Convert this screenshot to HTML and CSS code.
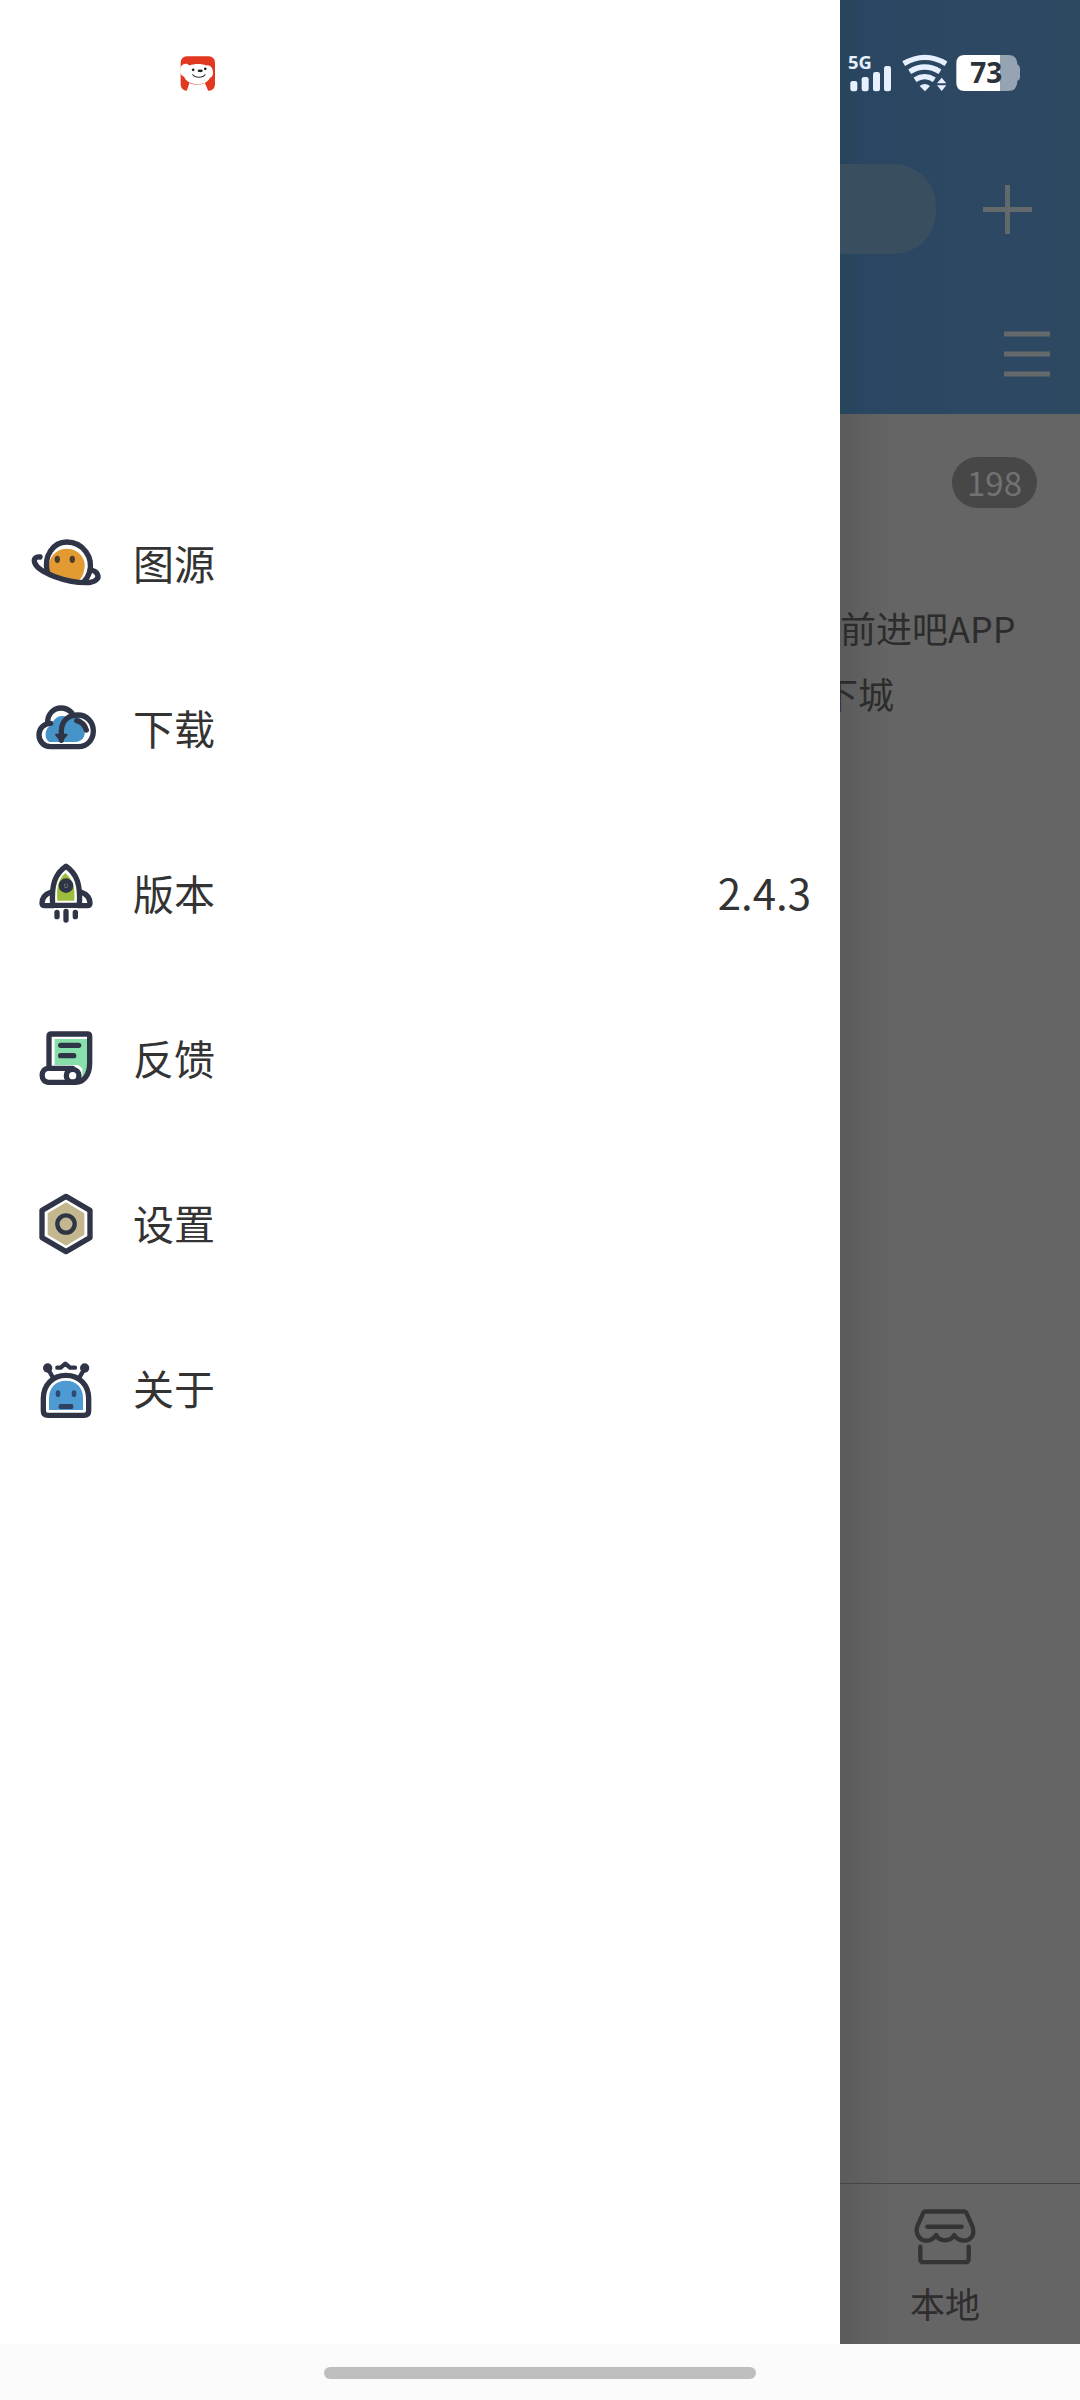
FILE: index.html
```
<!DOCTYPE html>
<html lang="zh-CN">
<head>
    <meta charset="utf-8">
    <meta name="viewport" content="width=device-width, initial-scale=1">
    <title>菜单</title>
    <link rel="stylesheet" href="styles.css">
</head>
<body>
    <div class="screen">
        <aside class="drawer">
            <div class="drawer-status">
                <svg class="logo" viewBox="60 48 104 104" aria-hidden="true">
                    <rect x="62" y="49" width="102" height="102" rx="18" fill="#e2381f"/>
                    <path d="M64 78c8-10 18-8 24-2 14-6 38-6 50 0 10-3 20 6 20 20 0 8-2 14-8 16-8 16-24 20-38 20-18 0-32-5-40-22-12-4-15-20-8-32z" fill="#fff"/>
                    <path d="M88 128c14 6 34 6 46 0l10 24H80z" fill="#fff"/>
                    <path d="M97 102c7 12 32 12 38 0" fill="none" stroke="#333" stroke-width="3"/>
                    <ellipse cx="120" cy="92" rx="8" ry="4" fill="#222"/>
                    <circle cx="99" cy="89" r="4" fill="#222"/>
                    <circle cx="135" cy="86" r="4" fill="#222"/>
                </svg>
            </div>
            <nav>
                <ul class="menu">
                    <li>
                        <a href="#source">
                            <svg class="icon" viewBox="33 27 210 210" aria-hidden="true">
                                <path d="M86 156c-6-34 16-70 54-70 42 0 62 38 52 66-3 16-10 26-18 30-32 0-68-8-88-26z" fill="#e29a33"/>
                                <path d="M82 156c-12-48 18-90 58-90 50 0 82 48 68 92-4 12-8 18-14 24" class="line"/>
                                <path d="M60 111c-12-2-20 6-16 17 10 30 96 60 154 60 26 0 42-12 34-26-4-8-10-10-18-12" class="line"/>
                                <ellipse cx="112" cy="118" rx="8" ry="11" fill="#4b3b29"/>
                                <ellipse cx="157" cy="118" rx="8" ry="11" fill="#4b3b29"/>
                            </svg>
                            <span>图源</span>
                        </a>
                    </li>
                    <li>
                        <a href="#download">
                            <svg class="icon" viewBox="33 12 210 210" aria-hidden="true">
                                <path d="M88 156c-16-8-16-44 8-50 4-24 26-34 46-24 26-10 56 4 52 36 4 24-10 38-28 38z" fill="#4593c7"/>
                                <path d="M92 100c-20 0-35 15-35 34 0 20 14 36 34 36h85c26 0 44-22 44-47 0-27-20-48-46-48-30 0-48 18-50 46v30" class="line"/>
                                <path d="M83 96c0-24 18-42 40-42 14 0 24 6 32 14M170 92c14 3 24 12 29 28" class="line"/>
                                <path d="M108 134l16 20 16-20z" fill="#2f3546" stroke="#2f3546" stroke-width="6" stroke-linejoin="round"/>
                            </svg>
                            <span>下载</span>
                        </a>
                    </li>
                    <li>
                        <a href="#version">
                            <svg class="icon" viewBox="33 27 210 210" aria-hidden="true">
                                <path d="M98 166c-4-60 6-94 40-117 34 23 44 57 40 117z" class="line"/>
                                <path d="M112 152c-3-42 2-62 24-83 22 21 30 41 27 83z" fill="#9dbe3c"/>
                                <circle cx="138" cy="107" r="14" fill="#9dbe8c" class="line"/>
                                <circle cx="138" cy="107" r="5" fill="#2f3546"/>
                                <path d="M94 126c-18 6-28 18-28 34 0 5 3 7 8 7h24M182 126c18 6 28 18 28 34 0 5-3 7-8 7h-24" class="line"/>
                                <path d="M111 187v13M138 184v26M166 187v13" class="line"/>
                            </svg>
                            <span>版本</span>
                            <span class="value">2.4.3</span>
                        </a>
                    </li>
                    <li>
                        <a href="#feedback">
                            <svg class="icon" viewBox="33 27 210 210" aria-hidden="true">
                                <path d="M104 72h101v64c0 20-6 38-18 50V160l-14-10h-69z" fill="#87dfac"/>
                                <path d="M87 160V64q0-7 7-7h108q7 0 7 7v80c0 36-18 58-42 58H86c-26 0-26-42 0-42h72" class="line"/>
                                <circle cx="158" cy="182" r="19" fill="#fff" class="line"/>
                                <path d="M122 91h54M122 122h39" class="line"/>
                            </svg>
                            <span>反馈</span>
                        </a>
                    </li>
                    <li>
                        <a href="#settings">
                            <svg class="icon" viewBox="33 27 210 210" aria-hidden="true">
                                <path d="M138 67l55 33v64l-55 33-55-33v-64z" fill="#c2b78f"/>
                                <path d="M138 49l72 42v82l-72 42-72-42V91z" class="line"/>
                                <circle cx="138" cy="132" r="26" class="line thin"/>
                            </svg>
                            <span>设置</span>
                        </a>
                    </li>
                    <li>
                        <a href="#about">
                            <svg class="icon" viewBox="33 27 210 210" aria-hidden="true">
                                <path d="M87 195v-36c0-32 20-52 51-52s51 20 51 52v36z" fill="#4e9bd3"/>
                                <path d="M70 160c0-40 28-69 68-69s68 29 68 69v38q0 13-14 13H84q-14 0-14-13z" class="line"/>
                                <path d="M99 98L84 72M178 98l15-26" class="line thin"/>
                                <path d="M112 68h10l14-12 14 12h15" class="line thin"/>
                                <circle cx="83" cy="69" r="14" fill="#2f3546"/>
                                <circle cx="194" cy="69" r="14" fill="#2f3546"/>
                                <ellipse cx="114" cy="146" rx="7" ry="10" fill="#2c4a78"/>
                                <ellipse cx="162" cy="146" rx="7" ry="10" fill="#2c4a78"/>
                                <rect x="116" y="177" width="44" height="15" rx="5" fill="#2f4060"/>
                            </svg>
                            <span>关于</span>
                        </a>
                    </li>
                </ul>
            </nav>
        </aside>

        <main class="page">
            <header class="header">
                <div class="status">
                    <svg class="signal" viewBox="84 158 132 120" role="img" aria-label="5G">
                        <text x="84" y="207">5G</text>
                        <rect x="91" y="242" width="21" height="31" rx="7"/>
                        <rect x="125" y="230" width="21" height="43" rx="7"/>
                        <rect x="159" y="215" width="21" height="58" rx="7"/>
                        <rect x="192" y="197" width="21" height="76" rx="7"/>
                    </svg>
                    <svg class="wifi" viewBox="245 158 138 120" aria-hidden="true">
                        <path d="M250 190q64-38 127 0M268 214q45-28 91 0M284 238q29-18 58 0"/>
                        <path d="M298 257q15-12 31 0l-15 16zM350 249l14-17 14 17zM350 255h28l-14 17z" class="fill"/>
                    </svg>
                    <svg class="battery" viewBox="408 158 192 120" role="img" aria-label="73%">
                        <path d="M540 164h24q28 0 28 28 8 4 8 12v28q0 6-8 10 0 30-28 30h-24z" fill="#95a3b3"/>
                        <path d="M540 164H434q-25 0-25 25v58q0 25 25 25h106z" fill="#fff"/>
                        <text x="451" y="249">73</text>
                    </svg>
                </div>
                <div class="toolbar">
                    <div class="search"></div>
                    <button type="button" class="add" aria-label="添加">
                        <svg viewBox="0 0 50 50"><path d="M0 25h50M25 0v50"/></svg>
                    </button>
                </div>
                <div class="tools">
                    <button type="button" aria-label="列表">
                        <svg viewBox="0 0 46 46"><path d="M0 3h46M0 23h46M0 43h46"/></svg>
                    </button>
                </div>
            </header>
            <section class="content">
                <span class="badge">198</span>
                <p class="note">前进吧APP</p>
                <p class="note more">下城</p>
            </section>
            <footer class="tabs">
                <a href="#local" class="tab">
                    <svg viewBox="283 175 181 168" aria-hidden="true">
                        <path d="M314 182h118q4 0 6 4l18 40c10 30-8 44-24 44-14 0-24-6-31-17-10 20-44 22-54 0-8 12-18 17-30 17-20 0-36-22-26-46l17-38q2-4 6-4zM320 228h104M299 288v37q0 10 10 10h126q10 0 10-10v-37"/>
                    </svg>
                    <span>本地</span>
                </a>
            </footer>
        </main>
    </div>
    <div class="gesture"><div class="handle"></div></div>
</body>
</html>
```
FILE: styles.css
```
* {
    box-sizing: border-box;
}
body {
    margin: 0;
    min-height: 100vh;
    display: flex;
    flex-direction: column;
    background: #fff;
    color: #333;
    font-family: "Noto Sans CJK SC", sans-serif;
}
a {
    color: inherit;
    text-decoration: none;
}
button {
    padding: 0;
    border: 0;
    background: none;
}
svg {
    display: block;
    overflow: visible;
}

.screen {
    flex: 1;
    display: grid;
    grid-template-columns: 7fr 2fr;
}

/* drawer */
.drawer {
    background: #fff;
}
.drawer-status {
    height: 481px;
    padding: 56px 180px;
}
.logo {
    width: 35px;
    height: 35px;
}
.menu {
    list-style: none;
    margin: 0;
    padding: 0;
}
.menu a {
    display: flex;
    align-items: center;
    gap: 32px;
    height: 165px;
    padding: 0 29px 0 31px;
    font-size: 41px;
}
.menu span {
    padding-bottom: 4px;
}
.icon {
    width: 70px;
    height: 70px;
}
.line {
    stroke: #2f3546;
    stroke-width: 16;
    stroke-linecap: round;
    stroke-linejoin: round;
}
path.line {
    fill: none;
}
.thin {
    fill: none;
    stroke-width: 13;
}
.value {
    margin-left: auto;
    font-size: 42px;
}

/* dimmed page behind the drawer */
.page {
    display: flex;
    flex-direction: column;
    min-width: 0;
    overflow: hidden;
    background: linear-gradient(to right, #5b5b5b, #656565 50px);
}
.header {
    background: linear-gradient(to right, #26455a, #2a4662 20px, #2d4962);
}
.status {
    display: flex;
    align-items: center;
    height: 146px;
    padding-left: 8px;
}
.status svg {
    height: 40px;
}
.signal {
    width: 44px;
    margin-right: 10px;
    fill: #e6f0ff;
    font: bold 55px "Open Sans", sans-serif;
}
.wifi {
    width: 46px;
    margin-right: 8px;
    fill: none;
    stroke: #e6f0ff;
    stroke-width: 16;
}
.wifi .fill {
    fill: #e6f0ff;
    stroke: none;
}
.battery {
    width: 64px;
    fill: #2b323a;
    font: bold 84px "Noto Sans", sans-serif;
}
.toolbar {
    display: flex;
    align-items: center;
    justify-content: space-between;
    height: 126px;
    padding-right: 48px;
}
.search {
    width: 96px;
    height: 90px;
    border-radius: 0 42px 42px 0;
    background: #394e5e;
}
.add svg {
    width: 49px;
    height: 49px;
}
.tools {
    display: flex;
    justify-content: flex-end;
    align-items: center;
    height: 142px;
    padding: 22px 30px 0 0;
}
.tools svg {
    width: 46px;
    height: 46px;
}
.header button path {
    fill: none;
    stroke: #646a6c;
    stroke-width: 5;
}
.content {
    flex: 1;
    display: flex;
    flex-direction: column;
    color: #2c2c2c;
}
.badge {
    align-self: flex-end;
    width: 85px;
    margin: 43px 43px 86px 0;
    border-radius: 26px;
    background: #474747;
    color: #727272;
    font-size: 33px;
    line-height: 51px;
    text-align: center;
}
.note {
    margin: 0;
    font-size: 36px;
    line-height: 66px;
    white-space: nowrap;
}
/* the line begins under the drawer */
.more {
    margin-left: -18px;
}
.tabs {
    height: 161px;
    border-top: 1px solid #484444;
    color: #2f2d2d;
}
/* a quarter of the full width, partly covered by the drawer */
.tab {
    display: flex;
    flex-direction: column;
    align-items: center;
    gap: 14px;
    margin-left: -12.5%;
    padding-top: 25px;
    font-size: 35px;
    line-height: 48px;
}
.tab svg {
    width: 60px;
    height: 56px;
    fill: none;
    stroke: #363333;
    stroke-width: 13;
    stroke-linecap: round;
    stroke-linejoin: round;
}

.gesture {
    display: flex;
    justify-content: center;
    align-items: center;
    height: 56px;
    padding-top: 2px;
    background: #fbfbfb;
}
.handle {
    width: 40%;
    height: 12px;
    border-radius: 6px;
    background: #bebebe;
}
```
